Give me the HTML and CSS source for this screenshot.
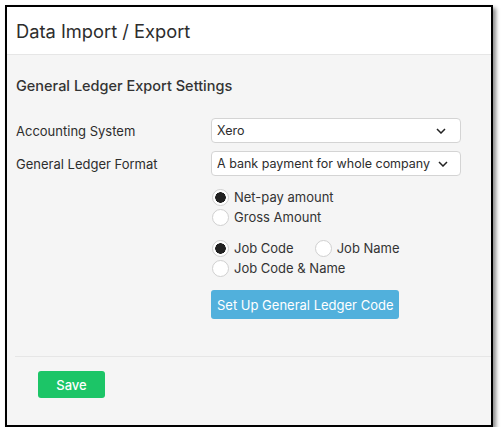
FILE: index.html
```html
<!DOCTYPE html>
<html lang="en">
<head>
  <title>Data Import / Export</title>
  <meta charset="UTF-8" />
<link rel="stylesheet" href="styles.css">
</head>
<body>
<div class="panel">
  <div class="panel-header">
    <h1>Data Import / Export</h1>
  </div>
  <div class="panel-body">
    <h2>General Ledger Export Settings</h2>

    <div class="row">
      <label for="system">Accounting System</label>
      <div class="select-wrap">
        <select id="system">
          <option>Xero</option>
        </select>
        <svg class="chevron" width="10" height="6" viewBox="0 0 10 6"><path d="M1 1 L5 5 L9 1" fill="none" stroke="#222" stroke-width="1.5"/></svg>
      </div>
    </div>

    <div class="row">
      <label for="format">General Ledger Format</label>
      <div class="select-wrap">
        <select id="format">
          <option>A bank payment for whole company</option>
        </select>
        <svg class="chevron" width="10" height="6" viewBox="0 0 10 6"><path d="M1 1 L5 5 L9 1" fill="none" stroke="#222" stroke-width="1.5"/></svg>
      </div>
    </div>

    <div class="options">
      <div class="radio-group">
        <label class="radio"><input type="radio" name="amount" checked> Net-pay amount</label>
        <label class="radio"><input type="radio" name="amount"> Gross Amount</label>
      </div>

      <div class="radio-group">
        <div class="radio-line">
          <label class="radio"><input type="radio" name="code" checked> Job Code</label>
          <label class="radio"><input type="radio" name="code"> Job Name</label>
        </div>
        <label class="radio"><input type="radio" name="code"> Job Code &amp; Name</label>
      </div>

      <div>
        <button type="button" class="btn-info">Set Up General Ledger Code</button>
      </div>
    </div>
  </div>
  <div class="panel-footer">
    <button type="button" class="btn-save">Save</button>
  </div>
</div>
</body>
</html>
```

FILE: styles.css
```css
body {
  margin: 0;
  background-color: #fff;
  font-family: Inter, 'Noto Sans', sans-serif;
  color: #333;
}

.panel {
  margin: 5px 0 0 5px;
  width: 484px;
  height: 418px;
  border: 2px solid #000;
  background-color: #f5f5f5;
  box-shadow: 3px 3px 4px rgba(0, 0, 0, 0.45);
  display: flex;
  flex-direction: column;
}

.panel-header {
  background-color: #fff;
  height: 47px;
  border-bottom: 1px solid #e6e6e6;
  display: flex;
  align-items: center;
  padding-left: 9px;
}

h1 {
  margin: 0;
  font-size: 18.3px;
  font-weight: 400;
  color: #2d2d2d;
}

.panel-body {
  padding: 21px 0 0 9px;
}

h2 {
  margin: 0 0 22px 0;
  font-size: 14.5px;
  font-weight: 500;
  line-height: 20px;
  color: #333;
}

.row {
  display: flex;
  align-items: center;
  margin-bottom: 8px;
}

.row label {
  width: 195px;
  font-size: 13px;
  font-weight: 400;
  color: #2d2d2d;
}

.select-wrap {
  position: relative;
  width: 250px;
}

select {
  appearance: none;
  width: 100%;
  height: 25px;
  padding: 0 5px;
  border: 1px solid #d4d4d4;
  border-radius: 4px;
  background-color: #fff;
  font-family: Inter, 'Noto Sans', sans-serif;
  font-size: 12.5px;
  color: #2d2d2d;
}

.chevron {
  position: absolute;
  right: 15px;
  top: 10px;
}

#format + .chevron {
  right: 13px;
}

.options {
  margin-left: 195px;
  padding-top: 3px;
}

.radio-group {
  margin-bottom: 11px;
}

.radio-line {
  display: flex;
  gap: 20px;
}

.radio {
  display: flex;
  align-items: center;
  gap: 5px;
  height: 20px;
  font-size: 13px;
  color: #333;
}

.radio input {
  appearance: none;
  margin: 0 0 0 1px;
  width: 17px;
  height: 17px;
  border: 1px solid #d0d0d0;
  border-radius: 50%;
  background-color: #fff;
}

.radio input:checked {
  background: radial-gradient(circle, #222 0, #222 5px, #fff 5.5px);
}

.btn-info {
  margin-top: 1px;
  padding: 0 6px;
  height: 29px;
  border: none;
  border-radius: 3px;
  background-color: #51b0dc;
  color: #fff;
  font-family: Inter, 'Noto Sans', sans-serif;
  font-size: 13px;
}

.panel-footer {
  margin: 37px 0 0 8px;
  border-top: 1px solid #e6e6e6;
  padding: 14px 0 0 23px;
}

.btn-save {
  width: 67px;
  height: 27px;
  border: none;
  border-radius: 3px;
  background-color: #1cc567;
  color: #fff;
  font-family: Inter, 'Noto Sans', sans-serif;
  font-size: 13px;
  font-weight: 500;
}
```
